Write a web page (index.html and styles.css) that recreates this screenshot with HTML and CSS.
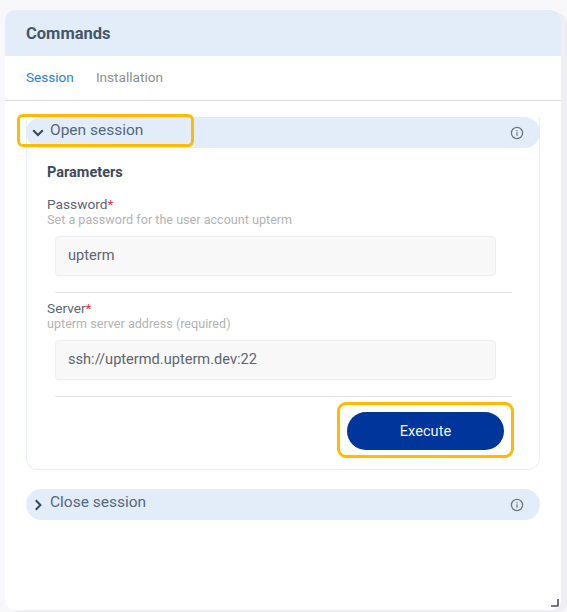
FILE: index.html
```html
<!DOCTYPE html>
<html lang="en">
<head>
<meta charset="utf-8">
<title>Commands</title>
<link rel="stylesheet" href="styles.css">
</head>
<body>
<main class="card">
  <header class="card-head">Commands</header>
  <nav class="tabs">
    <span class="tab active">Session</span>
    <span class="tab">Installation</span>
  </nav>
  <section class="content">
    <div class="acc">
      <div class="acc-head">
        <svg class="chev" viewBox="0 0 12 12" width="12" height="12"><path d="M1.2 3.2 6 8l4.8-4.8" fill="none" stroke="#34475f" stroke-width="2"/></svg>
        <span class="acc-title">Open session</span>
        <svg class="info" viewBox="0 0 14 14" width="14" height="14"><circle cx="7" cy="7" r="5.6" fill="none" stroke="#6b7787" stroke-width="1.3"/><path d="M7 6.2v3.6M7 4v1.2" stroke="#6b7787" stroke-width="1.2"/></svg>
        <span class="hl hl-open"></span>
      </div>
      <div class="acc-body">
        <h3 class="params">Parameters</h3>
        <div class="field">
          <div class="label">Password<span class="req">*</span></div>
          <div class="hint">Set a password for the user account upterm</div>
          <div class="input">upterm</div>
        </div>
        <div class="field">
          <div class="label">Server<span class="req">*</span></div>
          <div class="hint">upterm server address (required)</div>
          <div class="input">ssh://uptermd.upterm.dev:22</div>
        </div>
        <div class="actions">
          <div class="exec-wrap"><button class="exec">Execute</button></div>
        </div>
      </div>
    </div>
    <div class="acc-head closed">
      <svg class="chev" viewBox="0 0 12 12" width="12" height="12"><path d="M3.8 1.2 8.4 6l-4.6 4.8" fill="none" stroke="#34475f" stroke-width="2"/></svg>
      <span class="acc-title">Close session</span>
      <svg class="info" viewBox="0 0 14 14" width="14" height="14"><circle cx="7" cy="7" r="5.6" fill="none" stroke="#6b7787" stroke-width="1.3"/><path d="M7 6.2v3.6M7 4v1.2" stroke="#6b7787" stroke-width="1.2"/></svg>
    </div>
  </section>
  <svg class="grip" viewBox="0 0 8 8" width="8" height="8"><path d="M7 0v7H0" fill="none" stroke="#4a4f57" stroke-width="1.6"/></svg>
</main>
</body>
</html>
```
FILE: styles.css
```css
* { box-sizing: border-box; }
html, body { margin: 0; height: 100%; }
body {
  background: #f8f8fa;
  font-family: Roboto, "Liberation Sans", sans-serif;
  padding: 10px 6px 2px 5px;
  height: 612px;
  overflow: hidden;
}
.card {
  position: relative;
  height: 600px;
  background: #fff;
  border-radius: 10px;
  box-shadow: 6px 3px 0 #eeeef4;
  overflow: hidden;
}
.card-head {
  height: 46px;
  background: #e3edfa;
  padding-left: 21px;
  font-size: 16.5px;
  font-weight: 700;
  line-height: 47px;
  color: #45566b;
}
.tabs {
  height: 45px;
  display: flex;
  gap: 22px;
  padding: 0 0 2px 21px;
  align-items: center;
  border-bottom: 1px solid #dcdcdc;
  font-size: 13.6px;
}
.tab { color: #8f8f8f; }
.tab.active { color: #2a7be4; }
.content { padding: 16px 21px 0; }
.acc { border: 1px solid #e6effb; border-radius: 0 0 12px 12px; border-top: 0; }
.acc-head {
  position: relative;
  height: 31px;
  margin: 0 -1px;
  display: flex;
  align-items: center;
  background: #e3edfa;
  border-radius: 16px;
  padding: 0 16.5px 0 6px;
}
.acc-head.closed { margin: 19px 0 0; }
.chev { flex: none; }
.acc-title {
  margin-left: 6px;
  font-size: 15.5px;
  line-height: 22px;
  height: 28px;
  color: #55677e;
  flex: 1;
}
.hl {
  position: absolute;
  border: 3px solid #ffbb00;
  border-radius: 6px;
}
.hl-open { left: -9px; top: -3px; width: 177px; height: 33px; }
.acc-body { padding: 16px 27px 11px 20px; }
.params { margin: 0 0 14px; font-size: 14.5px; font-weight: 700; line-height: 18px; color: #3d4a5c; }
.field { border-bottom: 1px solid #e3e3e3; padding-bottom: 16px; margin-bottom: 7px; margin-left: 8px; }
.label { margin-left: -8px; font-size: 13.7px; line-height: 17px; color: #5b6472; }
.req { color: #ef3340; }
.hint { margin-left: -8px; font-size: 12.6px; line-height: 14px; color: #b3b3b3; margin-bottom: 9px; }
.input {
  width: 441px;
  height: 40px;
  background: #f8f8f8;
  border: 1px solid #eeeef0;
  border-radius: 4px;
  font-size: 14.6px;
  line-height: 36px;
  padding-left: 12px;
  color: #5f6570;
}
.actions { display: flex; justify-content: flex-end; margin-top: -2px; }
.exec-wrap {
  border: 3px solid #ffbb00;
  border-radius: 9px;
  padding: 7px 7px 5px;
  margin-right: -2px;
}
.exec {
  display: block;
  width: 157px;
  height: 38px;
  border: 0;
  border-radius: 19px;
  background: #00359c;
  color: #f1f4fa;
  font: 400 14.6px Roboto, "Liberation Sans", sans-serif;
}
.grip { position: absolute; right: 2px; bottom: 3px; }
```
